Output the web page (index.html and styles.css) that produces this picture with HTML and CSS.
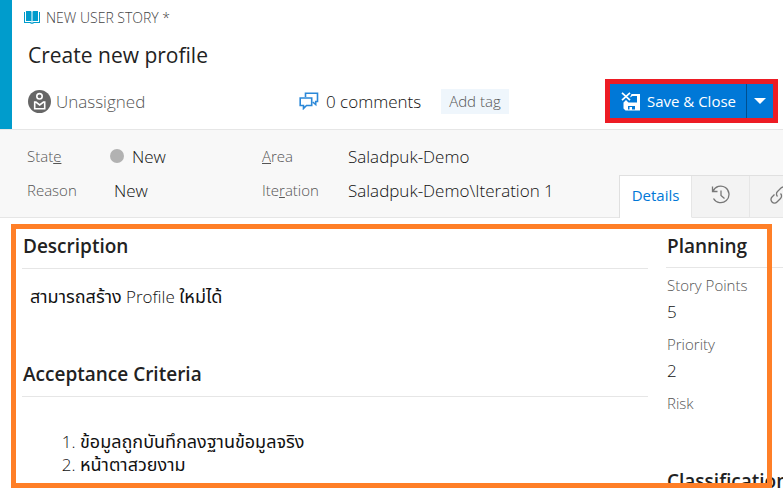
FILE: index.html
```
<!DOCTYPE html>
<html lang="en">
<head>
<meta charset="utf-8">
<meta name="viewport" content="width=device-width, initial-scale=1">
<title>New User Story</title>
<link rel="stylesheet" href="styles.css">
</head>
<body>
<main class="work-item">
  <header class="head">
    <div class="kind">
      <svg class="book" viewBox="0 0 16 14" width="16" height="14" aria-hidden="true">
        <path fill="#009ccc" d="M2 1h4.500q1 0 1 1v9.500q0-.5-1-.5H2zM14 1H9.500q-1 0-1 1v9.500q0-.5 1-.5H14zM0 2h1v10h5.500l1 .6h1l1-.6H15V2h1v11h-6l-1 .8H7L6 13H0z"/>
      </svg>
      <span>NEW USER STORY *</span>
    </div>
    <input class="title" type="text" value="Create new profile" aria-label="Title">
    <div class="meta">
      <div class="assignee">
        <svg viewBox="0 0 23 23" width="23" height="23" aria-hidden="true">
          <circle cx="11.500" cy="11.500" r="11.500" fill="#666"/>
          <g fill="none" stroke="#fff" stroke-width="1.600">
            <circle cx="11.500" cy="6.300" r="2.700"/>
            <path d="M6.700 12v6.700h10V12h-1.200l-3.800 3-3.800-3z"/>
          </g>
        </svg>
        <span>Unassigned</span>
      </div>
      <a class="comments" href="#comments">
        <svg viewBox="0 0 20 18" width="20" height="18" aria-hidden="true">
          <g fill="none" stroke="#2b88d8" stroke-width="1.600">
            <path d="M6.500 5V1.200h12v8.300h-1.800v3l-3-2.500"/>
            <path d="M1.200 6h11.500v7.500H7.500L4.500 16.500v-3H1.200z"/>
          </g>
        </svg>
        <span>0 comments</span>
      </a>
      <button class="tag" type="button">Add tag</button>
      <div class="save">
        <button class="save-main" type="button">
          <svg viewBox="0 0 20 19" width="20" height="19" aria-hidden="true">
            <path fill="#fff" fill-rule="evenodd" d="M10.500 2H19v16.500H4.500L2.500 16.500V10.500L5 8l2.500 2.500H16V4h-4.500L9 5.500zM7 14v3.500h1.500V15H11v2.500h3V14z"/>
            <path fill="none" stroke="#fff" stroke-width="1.700" d="M1 .8l8 7.400M9 .8L1 8.200"/>
          </svg>
          <span>Save &amp; Close</span>
        </button>
        <button class="save-more" type="button" aria-label="More save options">
          <svg viewBox="0 0 12 6" width="12" height="6" aria-hidden="true"><path fill="#fff" d="M0 0h12L6 6z"/></svg>
        </button>
      </div>
    </div>
  </header>

  <section class="band">
    <dl class="fields">
      <dt>Stat<u>e</u></dt>
      <dd class="state"><span class="dot"></span>New</dd>
      <dt><u>A</u>rea</dt>
      <dd>Saladpuk-Demo</dd>
      <dt>Reason</dt>
      <dd>New</dd>
      <dt>Ite<u>r</u>ation</dt>
      <dd>Saladpuk-Demo\Iteration 1</dd>
    </dl>
    <nav class="tabs">
      <a class="tab active" href="#details">Details</a>
      <a class="tab" href="#history" aria-label="History">
        <svg viewBox="0 0 20 20" width="20" height="20" aria-hidden="true">
          <path fill="none" stroke="#777" stroke-width="1.300" d="M1.500 1.500v5h5M2 6.300A8.300 8.300 0 1 1 2.500 13.500M10 5.500v5l3.500 3"/>
        </svg>
      </a>
      <a class="tab" href="#links" aria-label="Links">
        <svg viewBox="0 0 20 20" width="20" height="20" aria-hidden="true">
          <g fill="none" stroke="#777" stroke-width="1.300">
            <path d="M8.500 11.500a3.500 3.500 0 0 1 0-5l3.500-3.500a3.500 3.500 0 0 1 5 5l-2.500 2.500"/>
            <path d="M11.500 8.500a3.500 3.500 0 0 1 0 5L8 17a3.500 3.500 0 0 1-5-5l2.500-2.500"/>
          </g>
        </svg>
      </a>
    </nav>
  </section>

  <div class="body">
    <div class="main-col">
      <section class="description">
        <h2>Description</h2>
        <p><span lang="th">สามารถสร้าง</span> Profile <span lang="th">ใหม่ได้</span></p>
      </section>
      <section>
        <h2>Acceptance Criteria</h2>
        <ol>
          <li><span lang="th">ข้อมูลถูกบันทึกลงฐานข้อมูลจริง</span></li>
          <li><span lang="th">หน้าตาสวยงาม</span></li>
        </ol>
      </section>
    </div>
    <div class="side-col">
      <section class="planning">
        <h2>Planning</h2>
        <label for="points">Story Points</label>
        <input id="points" type="text" value="5">
        <label for="priority">Priority</label>
        <input id="priority" type="text" value="2">
        <label for="risk">Risk</label>
        <input id="risk" type="text">
      </section>
      <section>
        <h2>Classification</h2>
      </section>
    </div>
    <div class="highlight"></div>
  </div>
</main>
</body>
</html>
```
FILE: styles.css
```
* { box-sizing: border-box; }
html { height: 100%; }
body {
  margin: 0;
  height: 100%;
  overflow: hidden;
  background: #fff;
  color: #111;
  font-family: "Open Sans", "Noto Sans", "Noto Sans Thai", sans-serif;
  font-size: 17px;
  font-weight: 300;
}
a { color: inherit; text-decoration: none; }
button, input { font: inherit; color: inherit; border: 0; padding: 0; }
h2, p, dl, dd, ol { margin: 0; }
svg { display: block; flex: none; }
[lang="th"] { font-size: 18px; font-weight: 400; }

.head {
  border-left: 12px solid #009ccc;
  padding: 6px 5px 6px 16px;
}
.kind {
  display: flex;
  align-items: center;
  gap: 6px;
  height: 22px;
  margin-left: -4px;
  font-size: 14px;
  color: #444;
}
.title {
  display: block;
  width: 100%;
  height: 32px;
  margin: 11px 0 8px;
  background: none;
  color: #222;
  font-size: 21px;
  font-weight: 400;
}
.meta { display: flex; align-items: center; height: 44px; }
.assignee {
  display: flex;
  align-items: center;
  gap: 5px;
  width: 271px;
  color: #555;
}
.comments { display: flex; align-items: center; gap: 7px; }
.tag {
  height: 25px;
  margin-left: 20px;
  padding: 0 8px;
  background: #eff6fc;
  color: #555;
  font-size: 15px;
}
.save {
  display: flex;
  margin-left: auto;
  border: 5px solid #ed1c24;
  height: 44px;
}
.save button { background: #0078d7; color: #fff; }
.save-main {
  display: flex;
  align-items: center;
  gap: 6px;
  padding: 0 10px 0 11px;
  font-size: 15px;
  font-weight: 400;
}
.save .save-more {
  display: flex;
  align-items: center;
  justify-content: center;
  width: 27px;
  border-left: 1px solid #004f8f;
}

.band {
  display: flex;
  height: 89px;
  background: #f8f8f8;
  border-top: 1px solid #e6e6e6;
  box-shadow: inset 0 -1px #e6e6e6;
}
.fields {
  display: grid;
  grid-template-columns: 87px 148px 86px 271px;
  grid-auto-rows: 34px;
  align-items: center;
  padding: 9px 0 0 27px;
}
.fields dt { font-size: 15px; color: #555; }
.fields dd { white-space: nowrap; }
.state { display: flex; align-items: center; gap: 8px; margin-left: -4px; }
.dot { width: 14px; height: 14px; border-radius: 50%; background: #b2b2b2; }

.tabs {
  display: flex;
  flex: 1;
  min-width: 0;
  align-self: flex-end;
  height: 43px;
  overflow: hidden;
  border-top: 1px solid #e0e0e0;
  border-left: 1px solid #e0e0e0;
}
.tab {
  display: flex;
  flex: none;
  align-items: center;
  justify-content: center;
  width: 58px;
  padding-bottom: 4px;
  background: #f3f3f3;
  border-right: 1px solid #e6e6e6;
  border-bottom: 1px solid #e6e6e6;
}
.tab.active {
  width: 72px;
  background: #fff;
  border-bottom-color: #fff;
  color: #0078d7;
  font-size: 15px;
  font-weight: 400;
}

.body {
  position: relative;
  display: grid;
  grid-template-columns: minmax(0, 1fr) 117px;
  gap: 18px;
  height: 270px;
  padding: 10px 0 0 22px;
  overflow: hidden;
}
h2 {
  height: 41px;
  padding-left: 1px;
  border-bottom: 1px solid #e6e6e6;
  color: #222;
  font-size: 19px;
  font-weight: 600;
  line-height: 36px;
}
.description { height: 128px; }
.description p { padding: 15px 0 0 8px; line-height: 24px; }
ol { padding: 33px 0 0 58px; line-height: 23px; }
.planning { display: flex; flex-direction: column; height: 235px; }
.planning label { padding-left: 1px; font-size: 15px; line-height: 20px; color: #555; }
.planning h2 { flex: none; height: 40px; margin-bottom: 7px; }
.planning input {
  width: 100%;
  height: 32px;
  margin-bottom: 7px;
  padding-left: 1px;
  background: none;
}
.highlight {
  position: absolute;
  inset: 6px 11px 0 11px;
  border: 5px solid #ff7f27;
  pointer-events: none;
}
```
